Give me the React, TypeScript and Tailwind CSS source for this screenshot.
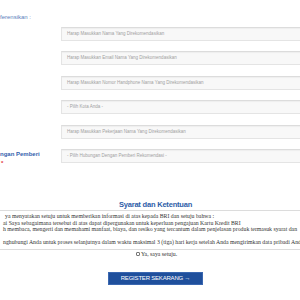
import React from "react";

const inputCls =
  "h-[14px] flex-1 -mr-[20px] border border-[#e4e4e4] border-t-[#dcdcdc] bg-[#f8f8f8] shadow-[inset_0_1px_1px_rgba(0,0,0,0.04)] flex items-center pl-[5px] text-[4.5px] text-[#a0a0a0] whitespace-nowrap overflow-hidden";

function Row({ text, mt, label }: { text: string; mt: string; label?: React.ReactNode }) {
  return (
    <div className={`flex ${mt}`}>
      <div className="w-[61px] shrink-0">{label}</div>
      <div className={inputCls}>{text}</div>
    </div>
  );
}

export default function App() {
  return (
    <div
      className="w-[300px] h-[300px] bg-white overflow-hidden"
      style={{ fontFamily: '"Liberation Sans", Arial, sans-serif' }}
    >
      <div className="pt-[14px] h-[20px] leading-[6px] text-[6px] text-[#5b7fbd] whitespace-nowrap">
        ferensikan :
      </div>
      <Row mt="mt-[7px]" text="Harap Masukkan Nama Yang Direkomendasikan" />
      <Row mt="mt-[10px]" text="Harap Masukkan Email Nama Yang Direkomendasikan" />
      <Row mt="mt-[11px]" text="Harap Masukkan Nomor Handphone Nama Yang Direkomendasikan" />
      <Row mt="mt-[10px]" text="- Pilih Kota Anda -" />
      <Row mt="mt-[11px]" text="Harap Masukkan Pekerjaan Nama Yang Direkomendasikan" />
      <Row
        mt="mt-[10px]"
        text="- Pilih Hubungan Dengan Pemberi Rekomendasi -"
        label={
          <div className="pt-[1px] text-[6px] leading-[8px] font-bold text-[#3462ad] whitespace-nowrap">
            <div>ngan Pemberi</div>
            <div className="text-[#e0343a] pl-[1px] pt-[1px]">*</div>
          </div>
        }
      />

      <div className="mt-[33px] pl-[11px] text-center text-[7.5px] leading-[9px] font-bold text-[#2d5da8] tracking-[-0.2px]">
        Syarat dan Ketentuan
      </div>
      <div
        className="border-t border-b border-[#dcdcdc] mt-[1px] pt-[2px] pb-[3px] text-[5.8px] leading-[6.5px] text-[#333] whitespace-nowrap overflow-hidden"
        style={{ fontFamily: '"Liberation Serif", "Times New Roman", serif' }}
      >
        <div className="pl-[5px]">ya menyatakan setuju untuk memberikan informasi di atas kepada BRI dan setuju bahwa :</div>
        <div className="pl-[3px]">ai Saya sebagaimana tersebut di atas dapat dipergunakan untuk keperluan pengajuan Kartu Kredit BRI</div>
        <div className="pl-[3px]">h membaca, mengerti dan memahami manfaat, biaya, dan resiko yang tercantum dalam penjelasan produk termasuk syarat dan</div>
        <div className="h-[6.5px]" />
        <div className="pl-[3px]">nghubungi Anda untuk proses selanjutnya dalam waktu maksimal 3 (tiga) hari kerja setelah Anda mengirimkan data pribadi Anda</div>
      </div>
      <div
        className="flex items-center pl-[136px] mt-[1px] text-[5.8px] leading-[7px] text-[#333]"
        style={{ fontFamily: '"Liberation Serif", "Times New Roman", serif' }}
      >
        <span className="w-[4px] h-[4px] border border-[#777] rounded-[1px] mr-[1px]" />
        <span>Ya, saya setuju.</span>
      </div>
      <div className="flex pl-[108px] mt-[14px]">
        <div className="w-[95px] h-[13px] bg-[#1f4f9c] border border-[#3a67b0] flex items-center justify-center text-white text-[6px] tracking-[-0.2px]">
          REGISTER SEKARANG →
        </div>
      </div>
    </div>
  );
}
